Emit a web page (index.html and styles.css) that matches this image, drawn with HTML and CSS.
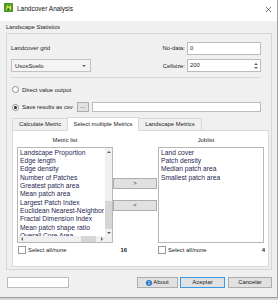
FILE: index.html
```html
<!DOCTYPE html>
<html>
<head>
    <meta charset="UTF-8">
    <title>Landcover Analysis</title>
    <link rel="stylesheet" href="styles.css">
</head>
<body>

<div class="window">
    <div class="titlebar">
        <svg class="app-icon" width="9" height="9" viewBox="0 0 9 9">
            <rect x="0" y="0" width="9" height="9" fill="#4f9a2c"/>
            <path d="M2 7 L3 2 L5 4 L7 1.5 L7 7 Z" fill="#d9e84a"/>
            <path d="M3 7 L4 4.5 L5.5 6 L5.5 7 Z" fill="#2d5f17"/>
        </svg>
        <span class="title">Landcover Analysis</span>
        <svg class="close" width="5" height="5" viewBox="0 0 5 5">
            <path d="M0 0 L5 5 M5 0 L0 5" stroke="#444" stroke-width="0.7"/>
        </svg>
    </div>

    <div class="main">
        <div class="legend">Landscape Statistics</div>
        <div class="group">
            <div class="row row-grid">
                <span>Landcover grid</span>
                <div class="pair">
                    <span class="pair-label">No-data:</span>
                    <div class="edit nodata">0</div>
                </div>
            </div>
            <div class="row row-combo">
                <div class="combo"><span>UsosSuelo</span><span class="caret"></span></div>
                <div class="pair">
                    <span class="pair-label">Cellsize:</span>
                    <div class="edit spin">
                        <span>200</span>
                        <span class="spin-arrows"><i class="tri-up"></i><i class="tri-down"></i></span>
                    </div>
                </div>
            </div>
            <div class="separator"></div>
            <div class="radio-row r1">
                <span class="radio"></span>
                <span>Direct value output</span>
            </div>
            <div class="radio-row r2">
                <span class="radio checked"></span>
                <span>Save results as csv</span>
                <div class="btn dots">...</div>
                <div class="edit path"></div>
            </div>

            <div class="tabs">
                <div class="tab t1">Calculate Metric</div>
                <div class="tab t2 active">Select multiple Metrics</div>
                <div class="tab t3">Landscape Metrics</div>
            </div>
            <div class="pane">
                <div class="lists">
                    <div class="col col-left">
                        <div class="caption">Metric list</div>
                        <div class="listbox scrolled">
                            <div class="items">
                                <div>Landscape Proportion</div>
                                <div>Edge length</div>
                                <div>Edge density</div>
                                <div>Number of Patches</div>
                                <div>Greatest patch area</div>
                                <div>Mean patch area</div>
                                <div>Largest Patch Index</div>
                                <div>Euclidean Nearest-Neighbor</div>
                                <div>Fractal Dimension Index</div>
                                <div>Mean patch shape ratio</div>
                                <div>Overall Core Area</div>
                            </div>
                            <div class="vscroll">
                                <span class="arrow"><i class="tri-up"></i></span>
                                <span class="track"></span>
                                <span class="thumb-v"></span>
                                <span class="arrow"><i class="tri-down"></i></span>
                            </div>
                            <div class="hscroll">
                                <span class="arrow"><i class="tri-left"></i></span>
                                <span class="track"></span>
                                <span class="thumb-h"></span>
                                <span class="gap"></span>
                                <span class="arrow"><i class="tri-right"></i></span>
                            </div>
                            <div class="corner"></div>
                        </div>
                    </div>
                    <div class="col col-mid">
                        <div class="btn move">&gt;</div>
                        <div class="btn move second">&lt;</div>
                    </div>
                    <div class="col col-right">
                        <div class="caption joblist">Joblist</div>
                        <div class="listbox plain">
                            <div class="items">
                                <div>Land cover</div>
                                <div>Patch density</div>
                                <div>Median patch area</div>
                                <div>Smallest patch area</div>
                            </div>
                        </div>
                    </div>
                </div>
                <div class="checks">
                    <div class="check-group left">
                        <span class="checkbox"></span>
                        <span>Select all/none</span>
                        <span class="count">16</span>
                    </div>
                    <div class="check-group right">
                        <span class="checkbox"></span>
                        <span>Select all/none</span>
                        <span class="count">4</span>
                    </div>
                </div>
            </div>
        </div>

        <div class="footer">
            <div class="edit status"></div>
            <div class="btn about">
                <svg width="6" height="6" viewBox="0 0 6 6">
                    <circle cx="3" cy="3" r="3" fill="#2b78c8"/>
                    <rect x="2.6" y="2.5" width="0.9" height="2.3" fill="#fff"/>
                    <rect x="2.6" y="1.1" width="0.9" height="0.8" fill="#fff"/>
                </svg>
                <span>About</span>
            </div>
            <div class="btn accept">Aceptar</div>
            <div class="btn cancel">Cancelar</div>
        </div>
    </div>
</div>

</body>
</html>
```

FILE: styles.css
```css
* { margin: 0; padding: 0; box-sizing: border-box;}
body { background: #d6d6d6; font-family: "Liberation Sans", Arial, sans-serif; font-size: 5.9px; color: #1c1c1c;}
i { display: block;}

.window { width: 278px; height: 298px; background: #f0f0f0; border-right: 1px solid #a4a4a4; border-bottom: 1px solid #9c9c9c; display: flex; flex-direction: column;}
.titlebar { height: 21px; flex: none; background: #fff; display: flex; align-items: flex-start; padding-left: 4px;}
.app-icon { margin-top: 3px;}
.title { font-size: 6.5px; line-height: 9px; margin-top: 4px; margin-left: 4px; color: #111;}
.close { margin-left: auto; margin-right: 6px; margin-top: 7px;}

.main { flex: 1; padding: 0 5px 0 6px; display: flex; flex-direction: column;}
.legend { height: 12px; padding-top: 1px; line-height: 11px;}
.group { height: 237px; border: 1px solid #d6d6d6; padding: 0 2px 2px 4px; display: flex; flex-direction: column;}

.row { display: flex; align-items: center; justify-content: space-between; margin-right: 8px; flex: none;}
.row-grid { margin-top: 7px; height: 14px;}
.row-combo { margin-top: 4px; height: 13px;}
.pair { display: flex; align-items: center;}
.pair-label { margin-right: 2px;}
.edit { background: #fff; border: 1px solid #bcbcbc; line-height: 11px; padding-left: 2px;}
.nodata { width: 74px; height: 13px;}
.spin { width: 74px; height: 13px; display: flex; align-items: center; justify-content: space-between; padding-right: 1px;}
.spin-arrows { display: flex; flex-direction: column; gap: 2px; margin-right: 1px;}
.combo { width: 80px; height: 13px; background: #f4f4f4; border: 1px solid #c2c2c2; display: flex; align-items: center; justify-content: space-between; padding: 0 4px 0 3px;}
.caret { width: 0; height: 0; border-left: 2px solid transparent; border-right: 2px solid transparent; border-top: 2px solid #666;}

.tri-up { width: 0; height: 0; border-left: 2px solid transparent; border-right: 2px solid transparent; border-bottom: 2px solid #606060;}
.tri-down { width: 0; height: 0; border-left: 2px solid transparent; border-right: 2px solid transparent; border-top: 2px solid #606060;}
.tri-left { width: 0; height: 0; border-top: 2px solid transparent; border-bottom: 2px solid transparent; border-right: 2px solid #606060;}
.tri-right { width: 0; height: 0; border-top: 2px solid transparent; border-bottom: 2px solid transparent; border-left: 2px solid #606060;}

.separator { height: 1px; background: #d8d8d8; margin: 5px 8px 0 -1px; flex: none;}

.radio-row { display: flex; align-items: center; margin-left: 1px; margin-right: 8px; flex: none;}
.r1 { margin-top: 6px; height: 11px;}
.r2 { margin-top: 7px; height: 10px;}
.radio { width: 7px; height: 7px; border-radius: 50%; border: 1px solid #8e8e8e; background: #fff; margin-right: 3px; display: flex; align-items: center; justify-content: center;}
.radio.checked::after { content: ""; width: 3px; height: 3px; border-radius: 50%; background: #222;}

.btn { background: #e1e1e1; border: 1px solid #adadad; text-align: center; line-height: 9px; color: #1c1c1c;}
.dots { width: 12px; height: 10px; line-height: 6px; margin-left: 4px;}
.path { flex: 1; height: 10px; margin-left: 3px;}

.tabs { display: flex; align-items: flex-end; height: 13px; margin: 5px 0 0 1px; flex: none;}
.tab { height: 12px; line-height: 11px; text-align: center; background: #f0f0f0; border: 1px solid #d9d9d9; border-bottom: none;}
.t1 { width: 56px;}
.t2 { width: 72px; margin-left: -1px;}
.t3 { width: 64px; margin-left: -1px;}
.tab.active { height: 14px; margin-bottom: -1px; background: #fff; position: relative; z-index: 1; line-height: 12px;}

.pane { height: 137px; margin-left: 1px; background: #fff; border: 1px solid #d9d9d9; flex: none;}
.lists { display: flex; padding: 4px 4px 0 4px;}
.col-left { width: 96px;}
.col-mid { width: 45px; padding-top: 43px;}
.col-right { width: 106px;}
.caption { height: 10px; line-height: 10px; text-align: center;}
.caption.joblist { padding-right: 10px;}

.listbox { margin-top: 2px; height: 96px; border: 1px solid #b8b8b8; background: #fff;}
.listbox.scrolled { display: grid; grid-template-columns: 1fr 7px; grid-template-rows: 1fr 6px;}
.items { overflow: hidden; padding: 0.5px 0 0 2px; font-size: 6.7px; line-height: 8.35px; color: #1f2752; white-space: nowrap;}

.vscroll { background: #f0f0f0; display: flex; flex-direction: column;}
.vscroll .arrow { height: 7px; display: flex; align-items: center; justify-content: center;}
.vscroll .track { flex: 1;}
.thumb-v { height: 28px; background: #d6d6d6;}
.hscroll { background: #f0f0f0; display: flex;}
.hscroll .arrow { width: 7px; display: flex; align-items: center; justify-content: center;}
.hscroll .track { flex: 1;}
.thumb-h { width: 15px; background: #d6d6d6;}
.hscroll .gap { width: 2px;}
.corner { background: #f0f0f0;}

.move { width: 44px; height: 11px;}
.move.second { margin-top: 11px;}

.checks { display: flex; padding-left: 5px; margin-top: 3px; height: 8px;}
.check-group { display: flex; align-items: center;}
.check-group.left { width: 109px;}
.check-group.right { width: 107px; margin-left: 31px;}
.checkbox { width: 8px; height: 8px; border: 1px solid #9a9a9a; background: #fff; margin-right: 2px;}
.count { margin-left: auto; font-weight: bold;}

.footer { display: flex; height: 11px; margin-top: 7px; flex: none;}
.status { width: 62px; height: 11px; margin-left: 1px;}
.about { width: 41px; margin-left: auto; display: flex; align-items: center; justify-content: center; gap: 1px;}
.accept { width: 45px; margin-left: 2px; border-color: #3a9ae6;}
.cancel { width: 44px; margin-left: 3px;}
```
